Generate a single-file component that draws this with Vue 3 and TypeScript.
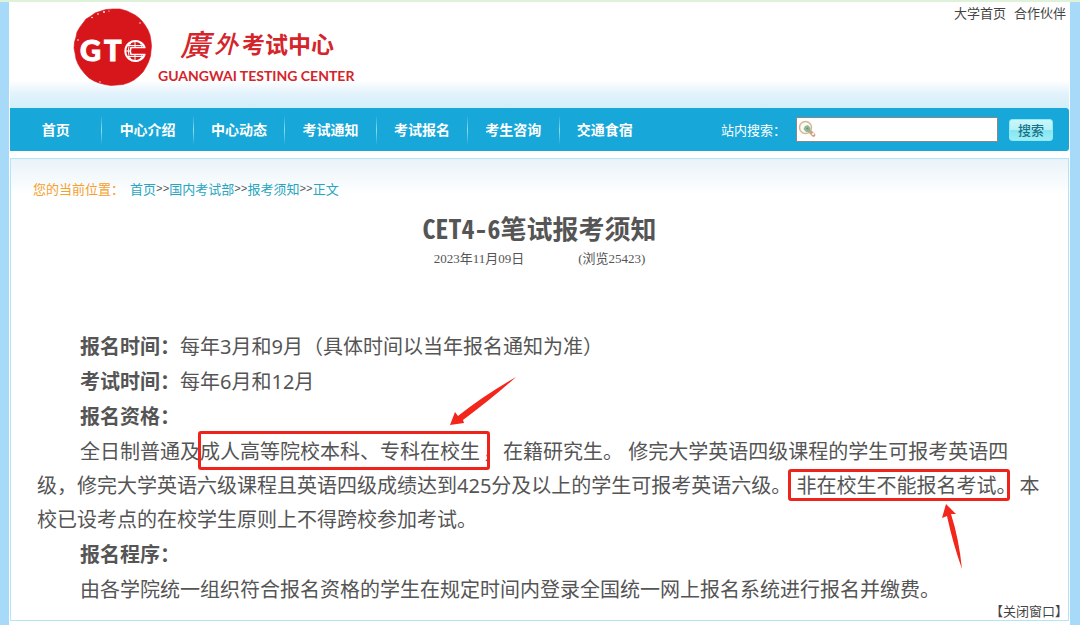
<script setup lang="ts">
import { ref } from 'vue'

interface Crumb {
  label: string
  href: string
}

const keyword = ref('')

const topLinks: string[] = ['大学首页', '合作伙伴']

const navItems: string[] = ['首页', '中心介绍', '中心动态', '考试通知', '考试报名', '考生咨询', '交通食宿']

const crumbs: Crumb[] = [
  { label: '首页', href: '#home' },
  { label: '国内考试部', href: '#domestic' },
  { label: '报考须知', href: '#notice' },
  { label: '正文', href: '#article' },
]
</script>

<template>
  <div class="page">
    <div class="frame">
      <header class="header">
        <a class="brand" href="#home" aria-label="广外考试中心">
          <svg class="seal" viewBox="0 0 80 80" aria-hidden="true">
            <path d="M40 2 L47 2 L54 4 L58 6 L62 8 L66 11 L69 14 L72 18 L75 23 L77 28 L78 34 L78.500 39 L78 44 L77.500 49 L75.500 55 L73 60 L70 65 L66 69 L61 73 L56 75.500 L50 77.500 L44 78 L38 78.500 L32 77.500 L26 76 L21 74 L16 71 L12 67 L8 62 L5 57 L3 52 L2 46 L1 41 L1.500 35 L3 30 L4 25 L7 20 L10 16 L13 12 L18 9 L22 6 L28 4 L33 2.500 Z" fill="#d7161c" stroke="#d7161c" stroke-width="0.600" stroke-linejoin="round" />
            <g fill="#fff">
              <circle cx="25" cy="7" r="0.800" />
              <circle cx="31" cy="5" r="0.900" />
              <circle cx="19" cy="10.500" r="0.800" />
              <circle cx="36" cy="4" r="0.600" />
              <circle cx="5" cy="33" r="0.800" />
              <circle cx="67" cy="16" r="0.700" />
              <circle cx="27" cy="75" r="0.700" />
            </g>
            <text class="seal-text" x="7" y="54">G</text>
            <text class="seal-text" x="31" y="54">T</text>
            <g fill="none" stroke="#fff">
              <path d="M71.500 40 A10 10 0 1 0 71.500 48" stroke-width="2" />
              <path d="M62 34 V40 M62 48 V54 M58 35 Q52.500 44 58 53 M66 35 Q68.500 37 69 40 M69 48 Q68.500 51 66 53 M54 38.500 H70 M52 44 H57 M54 49.500 H70" stroke-width="1" />
              <path d="M72.500 40.500 H58 Q56.500 44 58 47.500 H72.500" stroke-width="1.600" />
            </g>
          </svg>
          <span class="brand-text">
            <span class="brand-cn">
              <span class="brush brush-large">廣</span>
              <span class="brush">外</span>
              <span>考试中心</span>
            </span>
            <span class="brand-en">GUANGWAI TESTING CENTER</span>
          </span>
        </a>
        <div class="top-links">
          <a v-for="link in topLinks" :key="link" href="#top">{{ link }}</a>
        </div>
      </header>

      <nav class="nav">
        <ul class="menu">
          <li v-for="item in navItems" :key="item"><a href="#nav">{{ item }}</a></li>
        </ul>
        <form class="search" @submit.prevent>
          <label for="keyword">站内搜索：</label>
          <span class="field">
            <svg class="glass" viewBox="0 0 18 18" aria-hidden="true">
              <circle cx="7.500" cy="7.500" r="6" fill="#fbfaf3" stroke="#d3b896" stroke-width="1.500" />
              <path d="M5.500 9 L7 6 L10 5 L12.500 8 L12 12 L8 12 Z" fill="#8fb796" />
              <path d="M8 8 L10 7.500 L10.500 10 Z" fill="#5b9273" />
              <path d="M12.500 12 L15.500 15" stroke="#cfa283" stroke-width="3.600" stroke-linecap="round" />
              <circle cx="15" cy="14" r="1.100" fill="#fff" />
            </svg>
            <input id="keyword" v-model="keyword" type="text" />
          </span>
          <button type="submit">搜索</button>
        </form>
      </nav>

      <main class="panel">
        <div class="crumbs">
          <span class="where">您的当前位置：</span>
          <template v-for="(crumb, i) in crumbs" :key="crumb.label">
            <span v-if="i > 0" class="sep">&gt;&gt;</span>
            <a :href="crumb.href">{{ crumb.label }}</a>
          </template>
        </div>

        <h1>CET4-6笔试报考须知</h1>
        <div class="meta">
          <span>2023年11月09日</span>
          <span>(浏览25423)</span>
        </div>

        <article class="article">
          <p><strong>报名时间：</strong>每年3月和9月（具体时间以当年报名通知为准）</p>
          <p><strong>考试时间：</strong>每年6月和12月</p>
          <p><strong>报名资格：</strong></p>
          <p>全日制普通及<span class="mark mark-first">成人高等院校本科、专科在校生<svg class="arrow" viewBox="0 0 68 50" aria-hidden="true"><path d="M1 49 L6 36 L9 40 Q34 20 67 1 Q45 21 14 44 L15 47 Z" fill="#f3261b" /></svg></span>，在籍研究生。 修完大学英语四级课程的学生可报考英语四级，修完大学英语六级课程且英语四级成绩达到425分及以上的学生可报考英语六级。 <span class="mark mark-second">非在校生不能报名考试。<svg class="arrow" viewBox="0 0 24 68" aria-hidden="true"><path d="M5 1 L15 11 L10 11 Q18 36 21 66 Q12 41 6 13 L1 15 Z" fill="#f3261b" /></svg></span>本校已设考点的在校学生原则上不得跨校参加考试。</p>
          <p><strong>报名程序：</strong></p>
          <p>由各学院统一组织符合报名资格的学生在规定时间内登录全国统一网上报名系统进行报名并缴费。</p>
        </article>

        <div class="close"><button type="button">【关闭窗口】</button></div>
      </main>
    </div>
  </div>
</template>

<style>
body {
  margin: 0;
  background: #a7daf9;
}
</style>

<style scoped>
.page {
  box-sizing: border-box;
  min-height: 100vh;
  padding: 0 10px 0 9px;
  border-top: 2px solid #def2d9;
  background: #a7daf9;
  color: #555;
  font-family: "Noto Sans", "Noto Sans CJK SC", sans-serif;
  font-size: 13px;
  text-spacing-trim: space-all;
  display: flex;
}

.frame {
  flex: 1;
  min-width: 0;
  padding: 0 1px;
  background: #fff;
}

a {
  color: inherit;
  text-decoration: none;
}

.header {
  display: flex;
  justify-content: space-between;
  align-items: flex-start;
  height: 106px;
  background: linear-gradient(#fff 0, #fff 74%, #e3f3fc 86%, #d2eff9 100%);
}

.brand {
  display: flex;
  gap: 5px;
  padding: 5px 0 0 63px;
  color: #d3252b;
}

.seal {
  width: 80px;
  height: 80px;
}

.seal-text {
  fill: #fff;
  stroke: #fff;
  stroke-width: 1px;
  font-family: Lato, "Open Sans", sans-serif;
  font-size: 29px;
  font-weight: 900;
}

.brand-text {
  display: flex;
  flex-direction: column;
}

.brand-cn {
  display: flex;
  align-items: center;
  gap: 4px;
  height: 59px;
  padding: 12px 0 0 22px;
  box-sizing: border-box;
  font-family: "Noto Sans CJK SC", sans-serif;
  font-size: 23px;
  font-weight: 700;
}

.brush {
  font-family: "Noto Sans CJK TC", sans-serif;
  font-size: 24px;
  font-style: italic;
  font-weight: 500;
}

.brush-large {
  font-size: 30px;
}

.brand-en {
  font-family: Lato, sans-serif;
  font-size: 14px;
  font-weight: 700;
  line-height: 20px;
  white-space: nowrap;
}

.top-links {
  display: flex;
  gap: 8px;
  padding: 1px 3px 0 0;
  color: #444;
  line-height: 20px;
}

.nav {
  display: flex;
  justify-content: space-between;
  align-items: center;
  height: 43px;
  border-radius: 0 3px 3px 0;
  background: #17a7d8;
  color: #fff;
}

.menu {
  display: grid;
  grid-template-columns: repeat(7, 1fr);
  width: 640px;
  margin: 0;
  padding: 0;
  list-style: none;
  font-size: 14px;
  font-weight: 700;
  line-height: 28px;
  text-align: center;
}

.menu li + li {
  border-left: 1px solid;
  border-image: linear-gradient(#17a7d8, #8fdcf2 50%, #17a7d8) 1;
}

.menu a {
  display: block;
}

.search {
  display: flex;
  align-items: center;
  padding-right: 16px;
}

.search label {
  margin-right: 10px;
}

.field {
  position: relative;
  display: flex;
}

.glass {
  position: absolute;
  top: 3px;
  left: 2px;
  width: 18px;
  height: 18px;
}

.field input {
  box-sizing: border-box;
  width: 202px;
  height: 25px;
  padding: 0 4px 0 22px;
  border: 1px solid #888;
  border-radius: 0;
  background: #fff;
  font: inherit;
}

.search button {
  width: 44px;
  height: 22px;
  margin-left: 11px;
  padding: 0;
  border: 1px solid #8feaf4;
  border-radius: 3px;
  background: linear-gradient(#c9f6fb 0, #b5f1f8 50%, #85e6f2 50%, #9deef5 100%);
  color: #1b7387;
  font: inherit;
  font-weight: 500;
  line-height: 20px;
}

.panel {
  margin-top: 7px;
  border: 1px solid #b4e5f6;
  background: linear-gradient(#e9f3f9, #fff 36px);
}

.crumbs {
  display: flex;
  padding: 20px 22px 0;
  color: #28a5c0;
  line-height: 20px;
}

.where {
  margin-right: 6px;
  color: #f5a02c;
}

.sep {
  color: #555;
  font-family: "Liberation Mono", monospace;
  font-size: 11px;
}

h1 {
  margin: 11px 0 0;
  color: #555;
  font-family: "Noto Sans Mono CJK SC", "Liberation Mono", "Noto Sans CJK SC", monospace;
  font-size: 26px;
  font-weight: 700;
  line-height: 36px;
  text-align: center;
}

.meta {
  display: flex;
  justify-content: center;
  gap: 54px;
  padding-top: 3px;
  font-family: "Liberation Serif", "Noto Sans CJK SC", serif;
  font-size: 13px;
  line-height: 20px;
}

.article {
  display: flex;
  flex-direction: column;
  gap: 1px;
  margin-top: 61px;
  padding: 0 28px 0 26px;
  font-size: 20px;
  line-height: 34px;
}

.article p {
  margin: 0;
  text-indent: 43px;
}

.mark {
  position: relative;
  margin-right: 3px;
  text-indent: 0;
  white-space: nowrap;
}

.mark::after {
  content: "";
  position: absolute;
  border: 3px solid #ee241c;
  border-radius: 3px;
}

.mark-first::after {
  inset: -7px -10px -5px -2px;
}

.mark-second::after {
  inset: -3px 7px -2px -9px;
}

.arrow {
  position: absolute;
}

.mark-first .arrow {
  top: -62px;
  left: 249px;
  width: 68px;
  height: 50px;
}

.mark-second .arrow {
  top: 31px;
  left: 144px;
  width: 24px;
  height: 68px;
}

.close {
  display: flex;
  justify-content: flex-end;
  height: 16px;
  margin-top: -3px;
}

.close button {
  height: 13px;
  padding: 0;
  border: 0;
  background: none;
  color: #444;
  font: inherit;
  line-height: 10px;
}
</style>
